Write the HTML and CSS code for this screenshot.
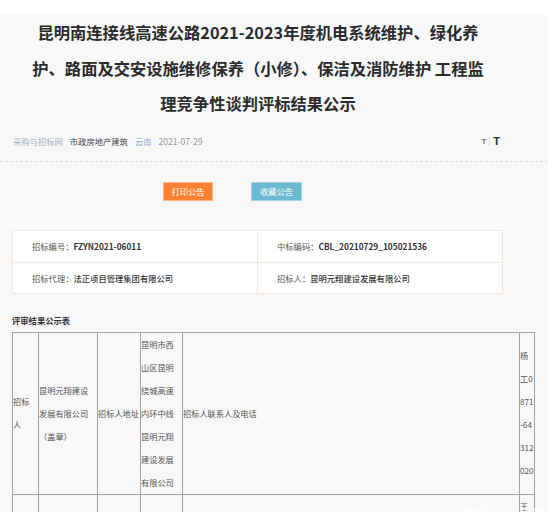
FILE: index.html
```html
<!DOCTYPE html>
<html lang="zh-CN">
<head>
<meta charset="utf-8">
<title>评标结果公示</title>
<link rel="stylesheet" href="styles.css">
</head>
<body>
<div class="page">
  <h1 class="title">昆明南连接线高速公路2021-2023年度机电系统维护、绿化养<br>护、路面及交安设施维修保养（小修）、保洁及消防维护 工程监<br>理竞争性谈判评标结果公示</h1>

  <div class="meta">
    <div class="crumbs">
      <span class="src">采购与招标网</span>
      <span class="cat">市政房地产建筑</span>
      <span class="area">云南</span>
      <span class="date">2021-07-29</span>
    </div>
    <div class="fontsize">
      <span class="t-small">T</span>
      <span class="sep"></span>
      <span class="t-big">T</span>
    </div>
  </div>

  <div class="actions">
    <a class="btn btn-print">打印公告</a>
    <a class="btn btn-fav">收藏公告</a>
  </div>

  <div class="info">
    <div class="cell">招标编号：<b>FZYN2021-06011</b></div>
    <div class="cell">中标编码：<b>CBL_20210729_105021536</b></div>
    <div class="cell">招标代理：<span class="val">法正项目管理集团有限公司</span></div>
    <div class="cell">招标人：<span class="val">昆明元翔建设发展有限公司</span></div>
  </div>

  <div class="section-label">评审结果公示表</div>

  <table class="result">
    <colgroup>
      <col class="c1"><col class="c2"><col class="c3"><col class="c4"><col class="c5"><col class="c6">
    </colgroup>
    <tr>
      <td>招标人</td>
      <td>昆明元翔建设发展有限公司（盖章）</td>
      <td>招标人地址</td>
      <td>昆明市西山区昆明绕城高速内环中线昆明元翔建设发展有限公司</td>
      <td>招标人联系人及电话</td>
      <td class="phone">杨工0871-64312020</td>
    </tr>
    <tr>
      <td>招标代理</td>
      <td>法正项目管理集团有限公司（盖章）</td>
      <td>代理地址</td>
      <td>昆明市</td>
      <td>招标代理联系人及电话</td>
      <td class="phone">王工0871-64312020</td>
    </tr>
  </table>

  <div class="watermark">puhzuu.com</div>
</div>
</body>
</html>
```

FILE: styles.css
```css
html, body {
  margin: 0;
  padding: 0;
  background: #ffffff;
  overflow: hidden;
}

body {
  font-family: "Noto Sans CJK SC", "Noto Sans", sans-serif;
  color: #555;
}

.page {
  position: relative;
  width: 548px;
  min-height: 700px;
  background: #f8f8f8;
}

.title {
  margin: 15px 0 0;
  padding: 0 40px 0 8px;
  font-size: 16.3px;
  font-weight: 700;
  line-height: 35.5px;
  color: #2b2b2b;
  text-align: center;
  white-space: nowrap;
}

.meta {
  display: flex;
  align-items: center;
  justify-content: space-between;
  height: 39px;
  padding: 0 48px 0 13px;
  border-bottom: 1px dashed #dcdcdc;
  font-size: 8.3px;
}

.crumbs {
  display: flex;
  gap: 7px;
}

.src { color: #a3b3c3; }
.cat { color: #444; }
.area { color: #98aeca; }
.date { color: #9a9a9a; font-size: 8.6px; }

.fontsize {
  display: flex;
  align-items: center;
  gap: 3px;
  font-family: "Liberation Sans", sans-serif;
  font-weight: 700;
}

.t-small {
  font-size: 8px;
  color: #777;
}

.sep {
  width: 1px;
  height: 9px;
  background: #e2e2e2;
}

.t-big {
  font-size: 11px;
  color: #333;
}

.actions {
  display: flex;
  gap: 38px;
  margin-top: 20px;
  padding-left: 163px;
}

.btn {
  display: block;
  box-sizing: border-box;
  width: 50px;
  height: 19px;
  line-height: 17px;
  font-size: 8.3px;
  color: #fff;
  text-align: center;
}

.btn-print {
  background: #ff8234;
  border: 1px solid #ffb283;
}

.btn-fav {
  width: 51px;
  background: #6bbad2;
  border: 1px solid #a2d3e2;
}

.info {
  display: grid;
  grid-template-columns: 245px 245px;
  width: 491px;
  box-sizing: border-box;
  margin: 29px 0 0 12px;
  background: #fff;
  border: 1px solid #f6e5da;
  font-size: 8.3px;
  color: #555;
}

.info .cell {
  height: 31px;
  line-height: 31px;
  padding-left: 19px;
  white-space: nowrap;
}

.info .cell:nth-child(odd) {
  border-right: 1px solid #f6e5da;
}

.info .cell:nth-child(n+3) {
  height: 30px;
  line-height: 30px;
  border-top: 1px solid #f6e5da;
}

.info b {
  font-weight: 700;
  color: #333;
}

.info .val {
  color: #3a3a3a;
  font-weight: 500;
}

.section-label {
  margin: 16px 0 2px 12px;
  font-size: 8.3px;
  line-height: 20px;
  font-weight: 700;
  color: #333;
}

.result {
  margin-left: 12px;
  border-collapse: collapse;
  table-layout: fixed;
  width: 522px;
  border: 1px solid #6f6f6f;
  font-size: 8.2px;
  line-height: 23px;
  color: #555;
}

.result col.c1 { width: 26px; }
.result col.c2 { width: 59px; }
.result col.c3 { width: 43px; }
.result col.c4 { width: 42px; }
.result col.c5 { width: 337px; }
.result col.c6 { width: 15px; }

.result td {
  padding: 0;
  border: 1px solid #a3a3a3;
  vertical-align: middle;
  text-align: left;
}

.result td:nth-child(1),
.result td:nth-child(2),
.result td:nth-child(4) {
  padding-right: 3px;
}

.result td.phone {
  word-break: break-all;
}

.watermark {
  position: absolute;
  left: 463px;
  top: 489px;
  font-family: "Liberation Sans", sans-serif;
  font-size: 16px;
  line-height: 16px;
  color: rgba(255, 255, 255, 0.9);
  white-space: nowrap;
}
```
